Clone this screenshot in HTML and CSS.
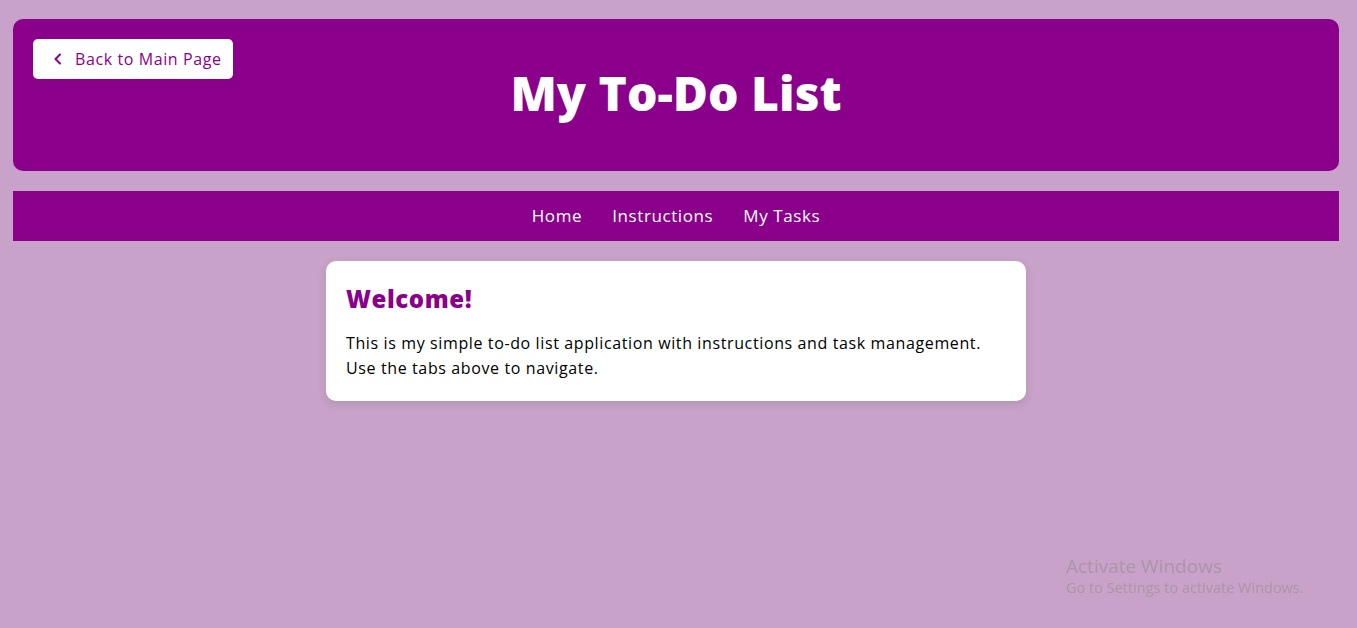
FILE: index.html
```html
<!DOCTYPE html>
<html lang="en">
<head>
<meta charset="utf-8">
<title>My To-Do List</title>
<link rel="stylesheet" href="styles.css">
</head>
<body>
<header class="header">
  <a class="back-btn" href="#">
    <svg class="chev" width="10" height="12" viewBox="0 0 10 12"><path d="M7 1.5 L2.5 6 L7 10.5" fill="none" stroke="#8b008b" stroke-width="2" stroke-linecap="round" stroke-linejoin="round"/></svg>
    <span>Back to Main Page</span>
  </a>
  <h1 class="title">My To-Do List</h1>
</header>
<nav class="nav">
  <a class="nav-link" href="#">Home</a>
  <a class="nav-link" href="#">Instructions</a>
  <a class="nav-link" href="#">My Tasks</a>
</nav>
<main class="main">
  <section class="card">
    <h2 class="card-title">Welcome!</h2>
    <p class="card-text">This is my simple to-do list application with instructions and task management. Use the tabs above to navigate.</p>
  </section>
</main>
<div class="watermark">
  <div class="wm-1">Activate Windows</div>
  <div class="wm-2">Go to Settings to activate Windows.</div>
</div>
</body>
</html>
```
FILE: styles.css
```css
* { box-sizing: border-box; }
html, body { height: 100%; }
body {
  margin: 0;
  padding: 19px 18px 0 13px;
  background: #c8a2c8;
  font-family: "Open Sans", "DejaVu Sans", sans-serif;
  color: #000;
}
.header {
  position: relative;
  background: #8b008b;
  border-radius: 10px;
  height: 152px;
  display: flex;
  align-items: center;
  justify-content: center;
}
.back-btn {
  position: absolute;
  left: 20px;
  top: 20px;
  width: 200px;
  height: 40px;
  background: #fff;
  border-radius: 5px;
  display: flex;
  align-items: center;
  padding-left: 20px;
  gap: 12px;
  color: #8b008b;
  text-decoration: none;
  font-size: 16px;
  letter-spacing: 0.6px;
}
.chev { display: block; }
.title {
  margin: 0;
  color: #fff;
  font-size: 48px;
  font-weight: 800;
  letter-spacing: 0;
  line-height: 1;
  padding-bottom: 4px;
}
.nav {
  margin-top: 20px;
  background: #8b008b;
  height: 50px;
  display: flex;
  justify-content: center;
  align-items: center;
  gap: 30px;
}
.nav-link {
  color: #fff;
  text-decoration: none;
  font-size: 17px;
  letter-spacing: 0.6px;
  padding-bottom: 2px;
}
.main {
  display: flex;
  justify-content: center;
  padding-top: 20px;
}
.card {
  width: 700px;
  background: #fff;
  border-radius: 10px;
  padding: 20px 20px 20px;
  box-shadow: 0 3px 10px rgba(0,0,0,0.1);
}
.card-title {
  margin: 0 0 14px;
  color: #8b008b;
  font-size: 24px;
  font-weight: 800;
  letter-spacing: 0.6px;
  line-height: 36px;
}
.card-text {
  margin: 0;
  font-size: 16px;
  line-height: 25px;
  letter-spacing: 0.62px;
}
.watermark {
  position: fixed;
  left: 1066px;
  top: 554px;
  color: rgba(150, 140, 150, 0.6);
  font-family: "Open Sans", sans-serif;
  pointer-events: none;
}
.wm-1 { font-size: 19px; line-height: 24px; }
.wm-2 { font-size: 14.5px; line-height: 20px; }
```
